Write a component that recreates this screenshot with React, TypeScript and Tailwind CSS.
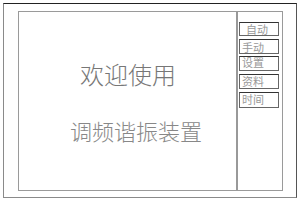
const buttons = [
  { label: '自动', cls: 'h-[14px] mt-0 pl-[6px] pt-[1px]' },
  { label: '手动', cls: 'h-[15px] mt-[3px] pl-[2px] pt-[2px]' },
  { label: '设置', cls: 'h-[15px] mt-[2px] pl-[2px] pt-0' },
  { label: '资料', cls: 'h-[15px] mt-[3px] pl-[2px] pt-[1px]' },
  { label: '时间', cls: 'h-[16px] mt-[3px] pl-[2px] pt-[1px]' },
];

export default function App() {
  return (
    <div
      className="h-[201px] w-[300px] bg-white p-[3px]"
      style={{ fontFamily: '"Noto Sans CJK SC", sans-serif' }}
    >
      <div className="h-full border border-[#8a8a8a] border-t-[#222] border-r-[#555] pb-[6px] pl-[14px] pr-[13px] pt-[7px]">
        <div className="flex h-full border border-[#9a9a9a]">
          {/* main welcome area */}
          <div className="flex flex-1 flex-col border-r-2 border-[#999]">
            <div className="pl-[61px] pt-[50px] text-[24px] font-light leading-none text-[#777]">欢迎使用</div>
            <div className="pl-[51px] pt-[33px] text-[22px] font-light leading-none text-[#888]">调频谐振装置</div>
          </div>
          {/* side menu */}
          <div className="flex w-[44px] flex-col pl-[1px] pt-[10px]">
            {buttons.map((b) => (
              <div
                key={b.label}
                className={`w-[40px] border border-[#666] border-t-[#333] text-[11px] leading-none text-[#999] ${b.cls}`}
              >
                {b.label}
              </div>
            ))}
          </div>
        </div>
      </div>
    </div>
  );
}
